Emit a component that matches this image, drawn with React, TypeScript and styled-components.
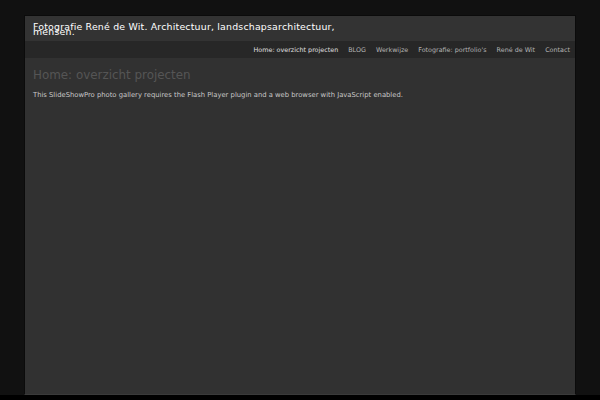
import React from "react";
import styled, { createGlobalStyle } from "styled-components";

const Global = createGlobalStyle`
  html { background: #000; }
  body { margin: 0; background: #000; font-family: "DejaVu Sans", Verdana, sans-serif; }
`;

const Page = styled.div`
  background: #111;
  height: 380px;
  padding-top: 15px;
`;

const Wrapper = styled.div`
  margin-left: 24px;
  width: 550px;
  height: 378px;
  border: 1px solid #0b0b0b;
  border-bottom: 1px solid #3a3a3a;
  background: #313131;
  display: flex;
  flex-direction: column;
`;

const Header = styled.header`
  background: #333;
  height: 25px;
  padding: 0 8px;
  box-sizing: border-box;
`;

const Title = styled.h1`
  margin: 0;
  padding-top: 8px;
  width: 320px;
  color: #fff;
  font-size: 9.4px;
  font-weight: normal;
  line-height: 5px;
  letter-spacing: 0.2px;
`;

const Nav = styled.nav`
  background: #272727;
  height: 17px;
  display: flex;
  justify-content: flex-end;
  align-items: center;
  gap: 10px;
  padding-right: 5px;
`;

const NavItem = styled.a<{ $active?: boolean }>`
  color: ${(p) => (p.$active ? "#e0e0e0" : "#b4b4b4")};
  font-size: 6.4px;
  text-decoration: none;
  white-space: nowrap;
`;

const Content = styled.main`
  padding: 10px 8px;
`;

const Heading = styled.h2`
  margin: 0;
  color: #555;
  font-size: 11.9px;
  font-weight: normal;
  line-height: 14px;
`;

const Text = styled.p`
  margin: 9px 0 0;
  color: #c8c8c8;
  font-size: 6.8px;
  line-height: 8px;
`;

const items = [
  "Home: overzicht projecten",
  "BLOG",
  "Werkwijze",
  "Fotografie: portfolio's",
  "René de Wit",
  "Contact",
];

export default function App() {
  return (
    <>
      <Global />
      <Page>
        <Wrapper>
          <Header>
            <Title>Fotografie René de Wit. Architectuur, landschapsarchitectuur, mensen.</Title>
          </Header>
          <Nav>
            {items.map((t, i) => (
              <NavItem key={t} href="#" $active={i === 0}>
                {t}
              </NavItem>
            ))}
          </Nav>
          <Content>
            <Heading>Home: overzicht projecten</Heading>
            <Text>
              This SlideShowPro photo gallery requires the Flash Player plugin and a web browser with JavaScript enabled.
            </Text>
          </Content>
        </Wrapper>
      </Page>
    </>
  );
}
